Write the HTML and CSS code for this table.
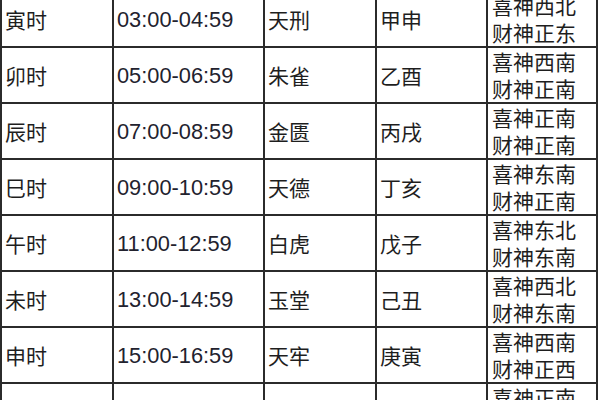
FILE: index.html
```html
<!DOCTYPE html>
<html lang="zh">
<head>
<meta charset="utf-8">
<title>时辰表</title>
<link rel="stylesheet" href="styles.css">
</head>
<body>
<table class="hours">
  <colgroup>
    <col class="c1"><col class="c2"><col class="c3"><col class="c4"><col class="c5">
  </colgroup>
  <tbody>
    <tr><td>寅时</td><td class="time">03:00-04:59</td><td>天刑</td><td>甲申</td><td class="gods">喜神西北<br>财神正东</td></tr>
    <tr><td>卯时</td><td class="time">05:00-06:59</td><td>朱雀</td><td>乙酉</td><td class="gods">喜神西南<br>财神正南</td></tr>
    <tr><td>辰时</td><td class="time">07:00-08:59</td><td>金匮</td><td>丙戌</td><td class="gods">喜神正南<br>财神正南</td></tr>
    <tr><td>巳时</td><td class="time">09:00-10:59</td><td>天德</td><td>丁亥</td><td class="gods">喜神东南<br>财神正南</td></tr>
    <tr><td>午时</td><td class="time">11:00-12:59</td><td>白虎</td><td>戊子</td><td class="gods">喜神东北<br>财神东南</td></tr>
    <tr><td>未时</td><td class="time">13:00-14:59</td><td>玉堂</td><td>己丑</td><td class="gods">喜神西北<br>财神东南</td></tr>
    <tr><td>申时</td><td class="time">15:00-16:59</td><td>天牢</td><td>庚寅</td><td class="gods">喜神西南<br>财神正西</td></tr>
    <tr><td>酉时</td><td class="time">17:00-18:59</td><td>玄武</td><td>辛卯</td><td class="gods">喜神正南<br>财神正西</td></tr>
  </tbody>
</table>
</body>
</html>
```

FILE: styles.css
```css
html, body {
  margin: 0;
  padding: 0;
  background: #fff;
  overflow: hidden;
}

.hours {
  border-collapse: collapse;
  table-layout: fixed;
  width: 598px;
  margin-top: -10px;
  font-family: "Noto Sans CJK SC", "Liberation Sans", sans-serif;
  font-size: 21px;
  color: #1e1e1e;
}

.c1 { width: 112px; }
.c2 { width: 151px; }
.c3 { width: 112px; }
.c4 { width: 111px; }
.c5 { width: 110px; }

.hours td {
  border: 2px solid #2b2b2b;
  height: 54px;
  padding: 0 0 0 3px;
  vertical-align: middle;
  line-height: 27px;
  white-space: nowrap;
  overflow: hidden;
}

.hours td.time {
  font-family: "Liberation Sans", Arial, sans-serif;
  font-size: 21.8px;
  color: #22222e;
}

.hours td.gods {
  padding-left: 4px;
  letter-spacing: 0;
}
```
